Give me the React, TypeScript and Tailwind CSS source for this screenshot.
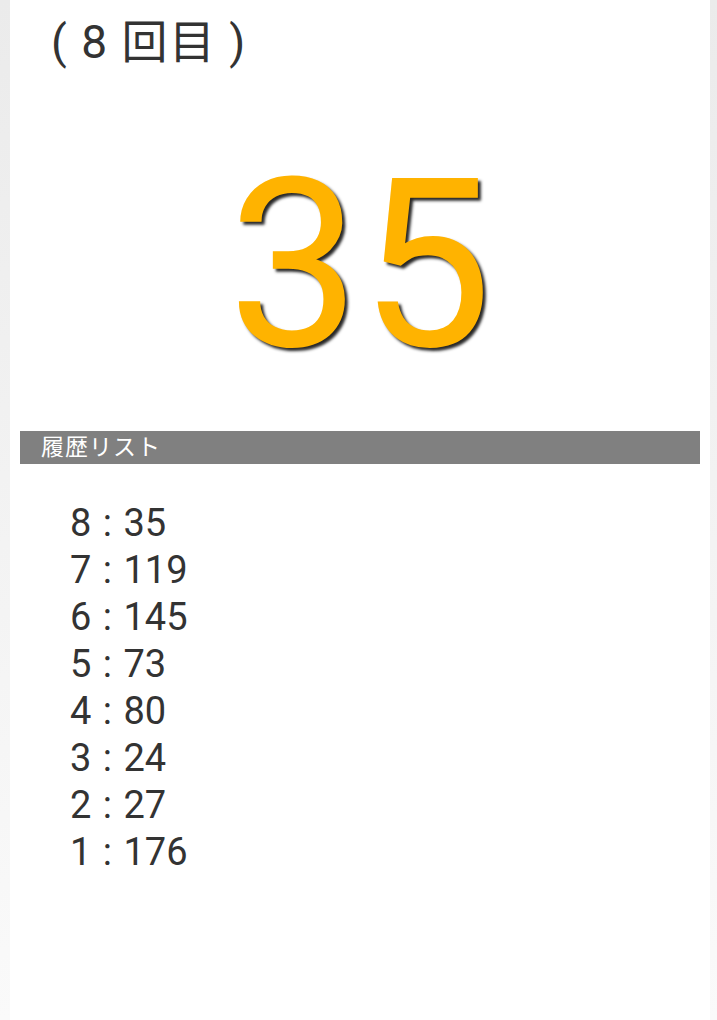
const history = [
  { n: 8, v: 35 },
  { n: 7, v: 119 },
  { n: 6, v: 145 },
  { n: 5, v: 73 },
  { n: 4, v: 80 },
  { n: 3, v: 24 },
  { n: 2, v: 27 },
  { n: 1, v: 176 },
];

export default function App() {
  return (
    <div className="min-h-[1020px] bg-[linear-gradient(180deg,#ebebeb_0%,#fafafa_100%)] font-['Roboto','Noto_Sans_CJK_JP',sans-serif] text-[#333]">
      <div className="ml-[10px] mr-[7px] min-h-[1020px] bg-white">
        <header className="pl-[41px] pt-[10px]">
          <h1 className="text-[46px] leading-[64px] font-normal tracking-[1.5px]">
            ( 8 回目 )
          </h1>
        </header>

        <div className="mt-[72px] flex justify-center">
          <span className="text-[235px] leading-[240px] text-[#FFB300] [text-shadow:3px_3px_3px_rgba(0,0,0,0.85)]">
            35
          </span>
        </div>

        <section className="mt-[45px] px-[10px]">
          <h2 className="h-[33px] bg-[#808080] pl-[21px] text-[23px] leading-[33px] tracking-[1px] text-white">
            履歴リスト
          </h2>
          <ul className="mt-[36px] pl-[50px]">
            {history.map((item) => (
              <li
                key={item.n}
                className="text-[38px] leading-[47px] [word-spacing:2px]"
              >
                {item.n} : {item.v}
              </li>
            ))}
          </ul>
        </section>
      </div>
    </div>
  );
}
